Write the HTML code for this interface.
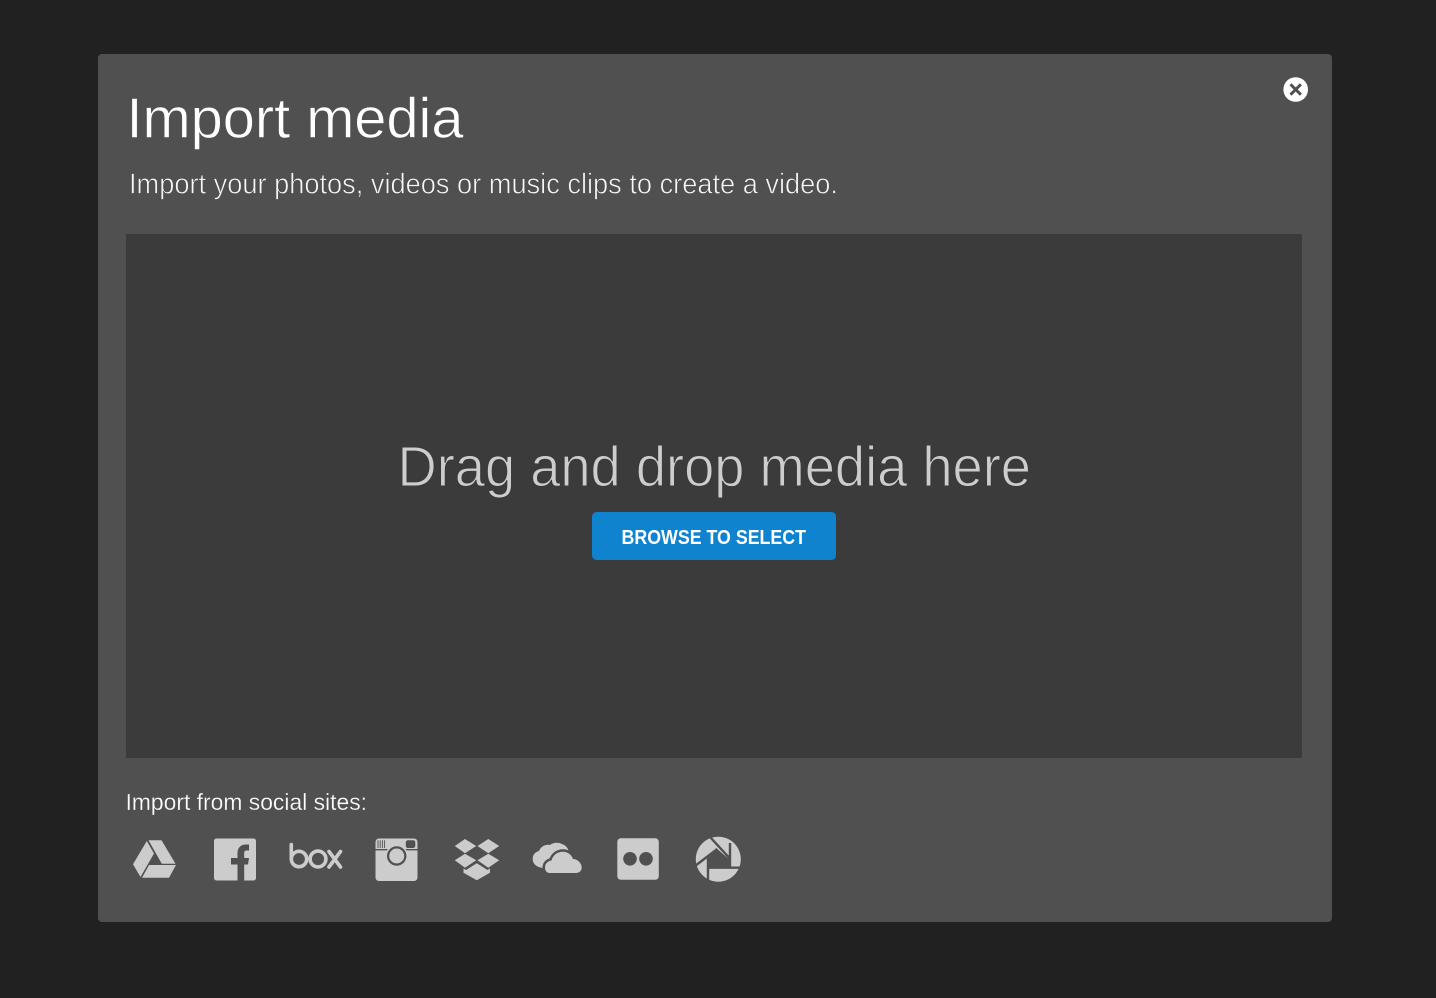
<!DOCTYPE html>
<html lang="en">
<head>
<meta charset="utf-8">
<title>Import media</title>
<style>
html,body{margin:0;padding:0;width:1436px;height:998px;overflow:hidden;background:#212121}
svg{display:block}
text{font-family:"Liberation Sans",Arial,sans-serif}
</style>
</head>
<body>
<svg xmlns="http://www.w3.org/2000/svg" width="1436" height="998" viewBox="0 0 1436 998">
<rect width="1436" height="998" fill="#212121"/>
<rect x="98" y="54" width="1234" height="868" rx="4" fill="#505050"/>
<rect x="126" y="234" width="1176" height="524" fill="#3b3b3b"/>

<text x="126.5" y="137.5" font-size="57" fill="#fff" textLength="337" lengthAdjust="spacingAndGlyphs" stroke="#505050" stroke-width=".6">Import media</text>
<text x="129" y="193.5" font-size="29" fill="#f8f8f8" textLength="709" lengthAdjust="spacingAndGlyphs" stroke="#505050" stroke-width=".7">Import your photos, videos or music clips to create a video.</text>
<text x="397.5" y="486" font-size="57" fill="#cdcdcd" textLength="633.5" lengthAdjust="spacingAndGlyphs" stroke="#3b3b3b" stroke-width="1.1">Drag and drop media here</text>

<rect x="592" y="512" width="244" height="48" rx="4.5" fill="#1083cf"/>
<text x="621.5" y="544" font-size="20" font-weight="700" fill="#fff" textLength="184.5" lengthAdjust="spacingAndGlyphs">BROWSE TO SELECT</text>

<text x="125.5" y="810" font-size="23" fill="#fff" textLength="241.5" lengthAdjust="spacingAndGlyphs" stroke="#505050" stroke-width=".25">Import from social sites:</text>

<circle cx="1295.7" cy="89.5" r="12.3" fill="#fff"/>
<path d="M1290.5 84.3L1300.9 94.7M1300.9 84.3L1290.5 94.7" stroke="#505050" stroke-width="2.9" fill="none"/>

<g fill="#cccccc">
<!-- Drive -->
<path d="M146.8 841L154 853.5L140.5 877L133 864.3Z"/>
<path d="M148.5 840.3H161.5L175.5 863.8H161.8Z"/>
<path d="M149 865H176L169 877.7H142Z"/>

<!-- Facebook -->
<rect x="214" y="838.5" width="42" height="42" rx="2.5"/>
<path fill="#505050" d="M237.5 881V864.5H231V858H237.5V853C237.5 847.5 241 844.5 246 844.5H249V850.5H246.5C244.7 850.5 244.2 851.5 244.2 853.5V858H249L248 864.5H244.2V881Z"/>

<!-- Box -->
<g fill="none" stroke="#cccccc" stroke-width="3.6" stroke-linecap="round">
<path d="M291.3 844.5V859"/>
<circle cx="299" cy="859" r="7.7"/>
<circle cx="318" cy="859" r="7.9"/>
<path d="M329 851.5L340.5 867M340.5 851.5L329 867"/>
</g>

<!-- Instagram -->
<rect x="375.5" y="838.5" width="42" height="42.5" rx="3.5"/>
<path d="M375.5 849.7H417.5" stroke="#505050" stroke-width="1.3"/>
<circle cx="396.7" cy="856" r="11.3"/>
<circle cx="396.7" cy="856" r="8.6" fill="#cccccc" stroke="#505050" stroke-width="2.2"/>
<rect x="405.8" y="840.2" width="9.5" height="7.8" rx="2.2" fill="#505050"/>
<path d="M378 840.3V848M380.2 840.3V848M382.4 840.3V848M384.6 840.3V848" stroke="#505050" stroke-width=".9"/>

<!-- Dropbox -->
<path d="M454.8 846L465 839L476.2 846L465 853.3Z"/>
<path d="M477.5 846L488.3 839L499.2 846L488.3 853.3Z"/>
<path d="M454.8 860.3L465 853.8L476.2 860.3L465 867.7Z"/>
<path d="M477.5 860.3L488.3 853.8L499.2 860.3L488.3 867.7Z"/>
<path d="M463.5 868.5L466 870L476.8 863.3L487.5 870L490 868.5V872.8L476.8 880.2L463.5 872.8Z"/>

<!-- OneDrive -->
<path d="M545 868C537 868 532.7 864 532.7 859C532.7 855 535 852 539 851C541 846 546 844 550 845C553 842.5 558 842 562 844C566 845.5 568 848 568.5 851L568 868Z"/>
<path stroke="#505050" stroke-width="5" d="M550 873C546.5 873 545 870.5 545 867.5C545 863.5 548 861 551.5 860.5C553 855 557.5 851.8 563 851.8C568 851.8 571.5 855 573 859C577.5 859 581.7 863 581.7 867.5C581.7 871 579 873 576 873Z"/>
<path d="M550 873C546.5 873 545 870.5 545 867.5C545 863.5 548 861 551.5 860.5C553 855 557.5 851.8 563 851.8C568 851.8 571.5 855 573 859C577.5 859 581.7 863 581.7 867.5C581.7 871 579 873 576 873Z"/>

<!-- Flickr -->
<rect x="617.3" y="838.3" width="41.5" height="41.5" rx="3.5"/>
<circle cx="630" cy="858.8" r="6.8" fill="#505050"/>
<circle cx="646" cy="858.8" r="6.8" fill="#505050"/>

<!-- Picasa -->
<circle cx="718.3" cy="859.2" r="22.5"/>
<path fill="#505050" d="M717.3 849L729.3 859.5L730 867.7L708.7 867.7L708 857.7Z"/>
<path d="M710.5 837.5L730 858.7M730 843V867.7M708.7 867.7H741.5M708 882V857.7M695 866L717.3 849" stroke="#505050" stroke-width="2.4" fill="none"/>
</g>
</svg>
</body>
</html>
